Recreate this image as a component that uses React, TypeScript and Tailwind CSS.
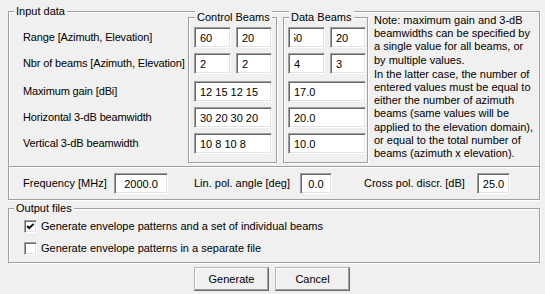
import clsx from 'clsx'

// sunken edit box (classic Win32 look)
function Edit({ value, w, center = false, shift = false }: { value: string; w: string; center?: boolean; shift?: boolean }) {
  return (
    <input
      readOnly
      value={value}
      className={clsx(
        'h-[21px] bg-white outline-none border border-t-[#a0a0a0] border-l-[#a0a0a0] border-r-white border-b-white shadow-[inset_1px_1px_0_#696969,inset_-1px_-1px_0_#e3e3e3]',
        w,
        center ? 'text-center px-0' : 'pl-[5px]',
        shift && 'indent-[-4px] pl-0',
      )}
    />
  )
}

function GroupLabel({ text, left = 'left-[5px]' }: { text: string; left?: string }) {
  return (
    <span className={clsx('absolute -top-[7px] px-[2px] bg-[#f0f0f0] leading-[13px] whitespace-nowrap', left)}>{text}</span>
  )
}

function CheckBox({ checked }: { checked: boolean }) {
  return (
    <span className="w-[13px] h-[13px] shrink-0 bg-white border border-t-[#a0a0a0] border-l-[#a0a0a0] border-r-white border-b-white shadow-[inset_1px_1px_0_#696969,inset_-1px_-1px_0_#e3e3e3] flex items-center justify-center">
      {checked && (
        <svg width="11" height="11" viewBox="0 0 11 11">
          <polyline points="2.2,5 4.2,7.2 8.6,2.8" fill="none" stroke="#000" strokeWidth="1.9" />
        </svg>
      )}
    </span>
  )
}

const groupBox = 'relative border border-[#a0a0a0] shadow-[1px_1px_0_#fff,inset_1px_1px_0_#fff]'
const rowGap = ['', 'mt-[5px]', 'mt-[7px]', 'mt-[5px]', 'mt-[5px]']

const labels = [
  'Range [Azimuth, Elevation]',
  'Nbr of beams [Azimuth, Elevation]',
  'Maximum gain [dBi]',
  'Horizontal 3-dB beamwidth',
  'Vertical 3-dB beamwidth',
]

const note1 = ['Note: maximum gain and 3-dB', 'beamwidths can be specified by', 'a single value for all beams, or', 'by multiple values.']
const note2 = [
  'In the latter case, the number of',
  'entered values must be equal to',
  'either the number of azimuth',
  'beams (same values will be',
  'applied to the elevation domain),',
  'or equal to the total number of',
  'beams (azimuth x elevation).',
]

function BeamColumn({ pair1, pair2, gain, hbw, vbw, first }: { pair1: [string, string]; pair2: [string, string]; gain: string; hbw: string; vbw: string; first: boolean }) {
  return (
    <div className="flex flex-col">
      <div className="flex gap-[5px]">
        <Edit value={pair1[0]} w="w-[37px]" shift={!first} />
        <Edit value={pair1[1]} w="w-[36px]" />
      </div>
      <div className={clsx('flex gap-[5px]', rowGap[1])}>
        <Edit value={pair2[0]} w="w-[37px]" />
        <Edit value={pair2[1]} w="w-[36px]" />
      </div>
      <div className={rowGap[2]}><Edit value={gain} w="w-[78px]" /></div>
      <div className={rowGap[3]}><Edit value={hbw} w="w-[78px]" /></div>
      <div className={rowGap[4]}><Edit value={vbw} w="w-[78px]" /></div>
    </div>
  )
}

export default function App() {
  return (
    <div className="w-[545px] h-[294px] bg-[#f0f0f0] pl-[8px] pr-[5px] pt-[11px] text-[11px] leading-[13px] text-black font-['Liberation_Sans',Arial,sans-serif] overflow-hidden">
      {/* Input data */}
      <div className={clsx(groupBox, 'h-[189px]')}>
        <GroupLabel text="Input data" />
        <div className="flex h-[154px]">
          {/* row labels */}
          <div className="w-[179px] shrink-0 pl-[14px] pt-[15px] flex flex-col tracking-[-0.14px]">
            {labels.map((l, i) => (
              <div key={l} className={clsx('h-[21px] flex items-center whitespace-nowrap', rowGap[i])}>{l}</div>
            ))}
          </div>

          <div className={clsx(groupBox, 'mt-[5px] w-[89px] h-[146px] pl-[5px] pt-[9px]')}>
            <GroupLabel text="Control Beams" left="left-[6px]" />
            <BeamColumn first pair1={['60', '20']} pair2={['2', '2']} gain="12 15 12 15" hbw="30 20 30 20" vbw="10 8 10 8" />
          </div>

          <div className={clsx(groupBox, 'ml-[6px] mt-[5px] w-[85px] h-[146px] pl-[4px] pt-[9px]')}>
            <GroupLabel text="Data Beams" />
            <BeamColumn first={false} pair1={['50', '20']} pair2={['4', '3']} gain="17.0" hbw="20.0" vbw="10.0" />
          </div>

          <div className="ml-[6px] pt-[2px] leading-[13.2px] whitespace-nowrap">
            {note1.map((t) => <div key={t}>{t}</div>)}
            <div className="mt-[1px]">
              {note2.map((t) => <div key={t}>{t}</div>)}
            </div>
          </div>
        </div>

        <div className="h-px bg-[#a0a0a0]" />
        <div className="h-px bg-white" />

        {/* frequency / polarisation row */}
        <div className="h-[31px] pl-[14px] flex items-center whitespace-nowrap">
          <span className="w-[91px]">Frequency [MHz]</span>
          <Edit value="2000.0" w="w-[54px]" center />
          <span className="ml-[26px] w-[106px]">Lin. pol. angle [deg]</span>
          <Edit value="0.0" w="w-[32px]" center />
          <span className="ml-[32px] w-[113px]">Cross pol. discr. [dB]</span>
          <Edit value="25.0" w="w-[33px]" center />
        </div>
      </div>

      {/* Output files */}
      <div className={clsx(groupBox, 'mt-[8px] h-[55px] pl-[15px] pt-[11px]')}>
        <GroupLabel text="Output files" />
        <label className="h-[13px] flex items-center gap-[4px] whitespace-nowrap">
          <CheckBox checked />
          <span>Generate envelope patterns and a set of individual beams</span>
        </label>
        <label className="mt-[9px] h-[13px] flex items-center gap-[4px] whitespace-nowrap">
          <CheckBox checked={false} />
          <span>Generate envelope patterns in a separate file</span>
        </label>
      </div>

      <div className="mt-[4px] pr-[4px] flex justify-center gap-[6px]">
        {['Generate', 'Cancel'].map((b) => (
          <button
            key={b}
            className="w-[75px] h-[24px] bg-[#f0f0f0] border border-t-[#b4b4b4] border-l-[#b4b4b4] border-r-[#696969] border-b-[#696969] shadow-[inset_-1px_-1px_0_#a0a0a0,inset_1px_1px_0_#fff]"
          >
            {b}
          </button>
        ))}
      </div>
    </div>
  )
}
